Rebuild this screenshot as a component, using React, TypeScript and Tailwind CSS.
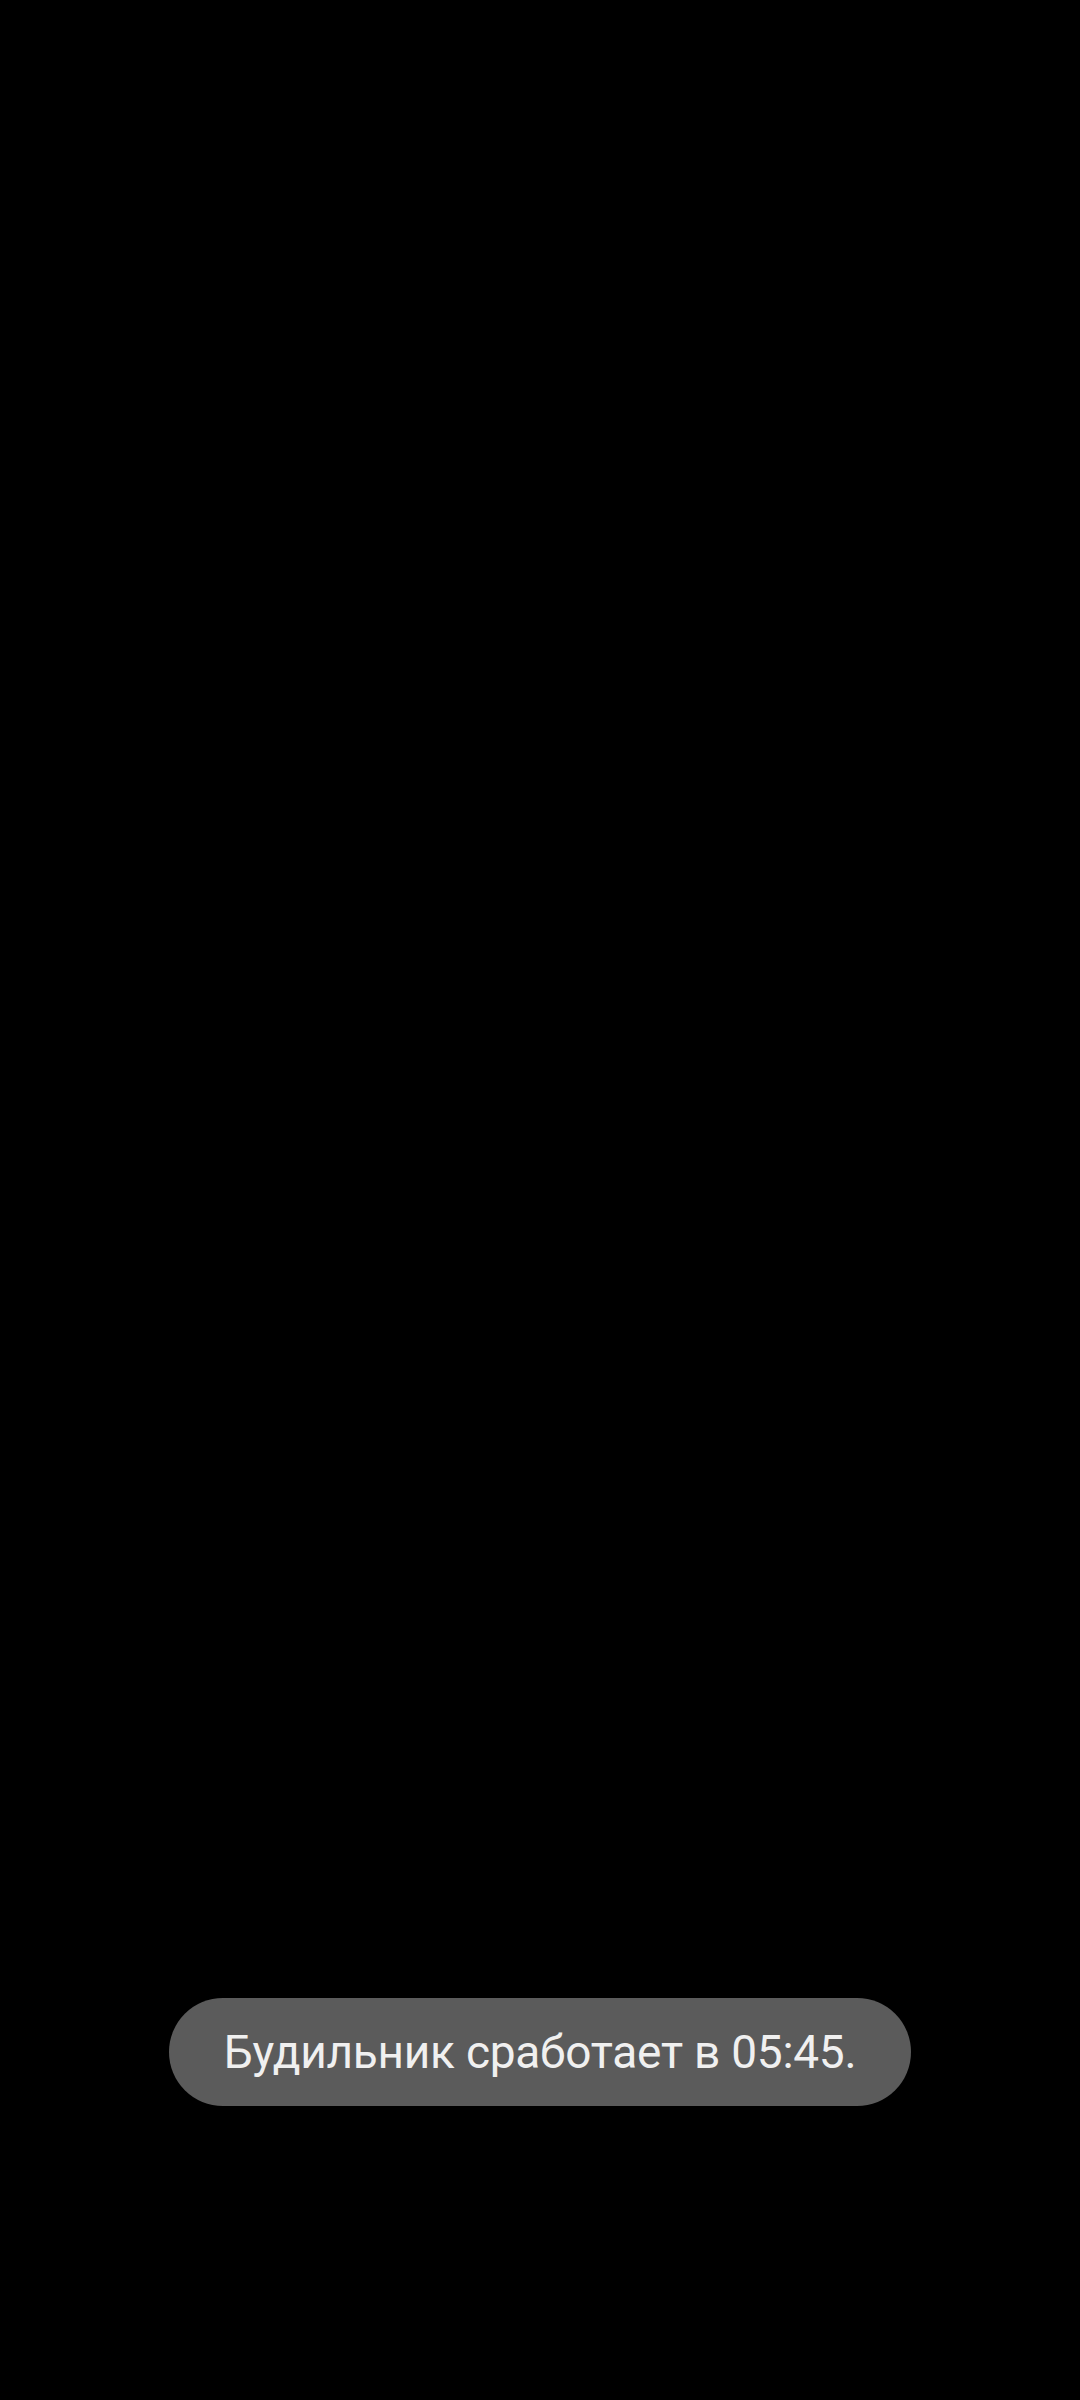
export default function App() {
  return (
    <div className="flex h-[2400px] w-[1080px] flex-col items-center justify-end bg-black pb-[294px]">
      {/* тост */}
      <div className="flex h-[108px] items-center rounded-full bg-[#5b5b5b] px-[55px]">
        <span
          className="text-[46px] leading-none tracking-[-0.25px] text-[#f0f0f0]"
          style={{ fontFamily: "Roboto, 'Noto Sans', sans-serif" }}
        >
          Будильник сработает в 05:45.
        </span>
      </div>
    </div>
  );
}
